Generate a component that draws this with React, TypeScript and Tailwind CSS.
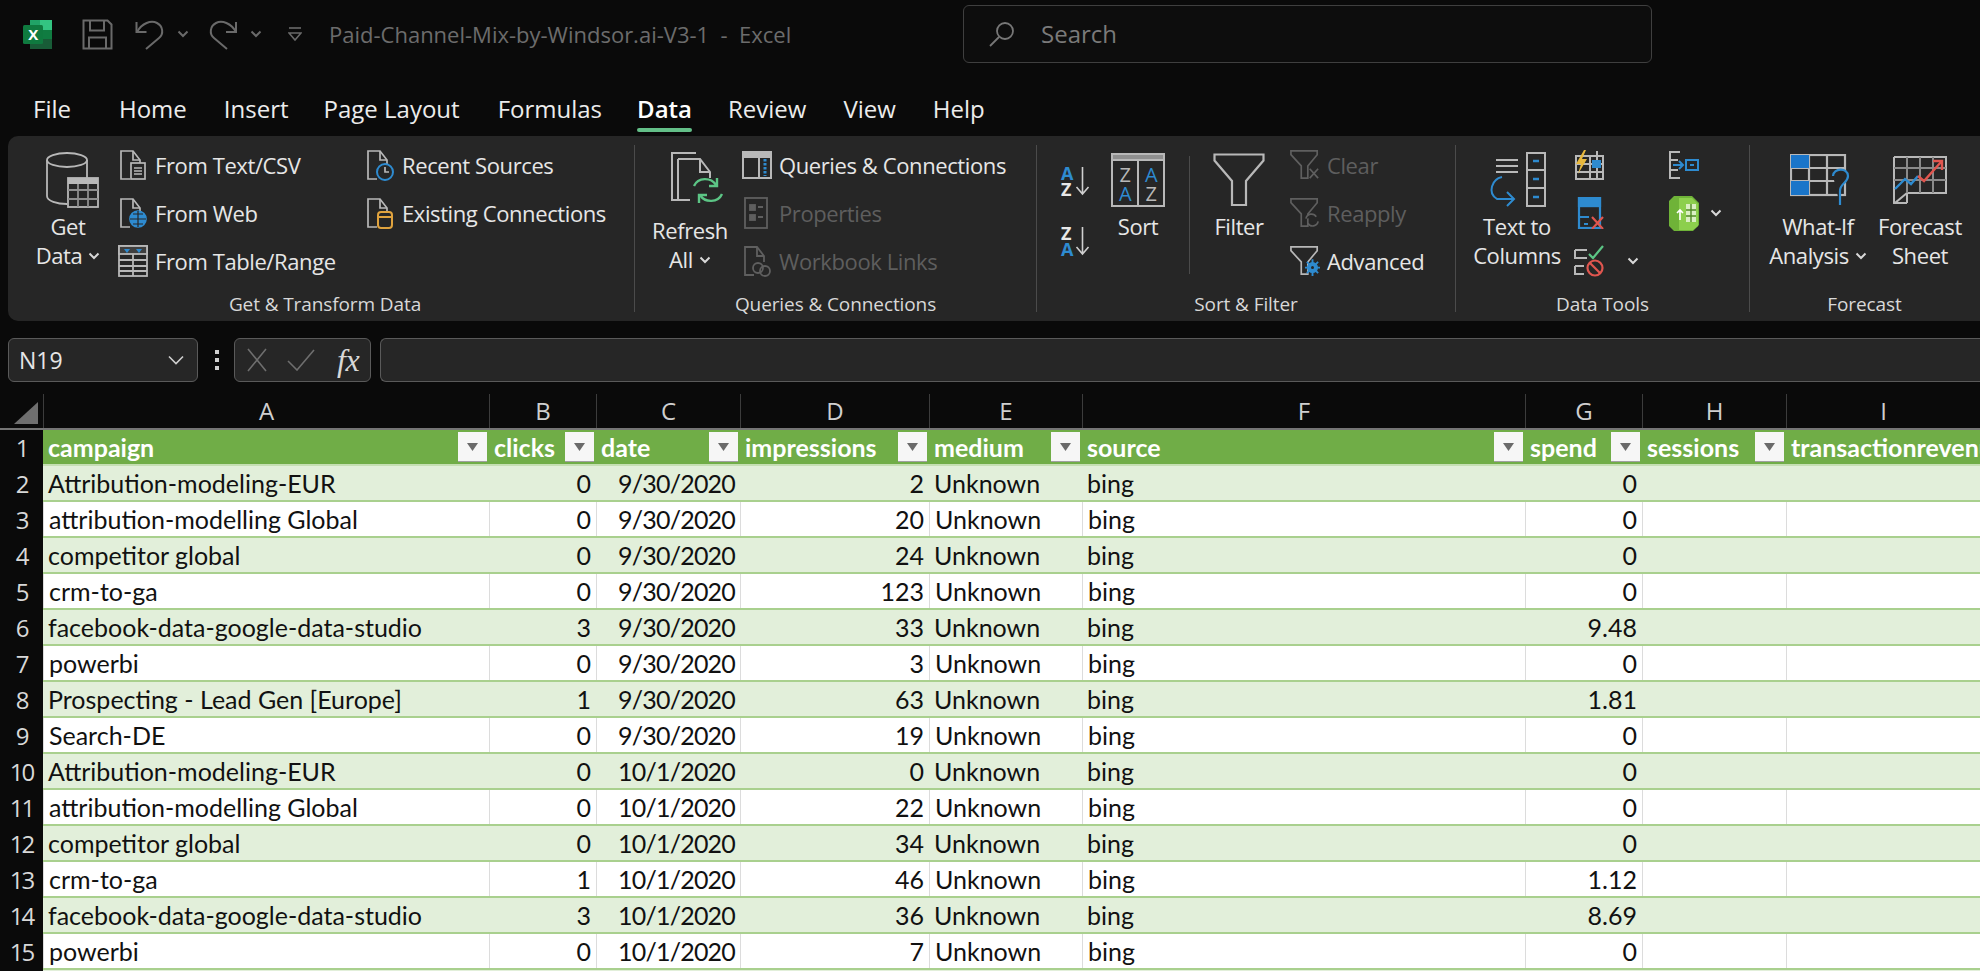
import React from "react";

const G = "#b8b8b8";
const D = "#5f5f5f";
const BL = "#2e8bd0";
const FONT = "font-['Open_Sans','Noto_Sans',sans-serif]";

const Chev = ({ c = "#d8d8d8" }: { c?: string }) => (
  <svg width="12" height="8" viewBox="0 0 12 8" fill="none" stroke={c} strokeWidth="2"><path d="M1.5 1.5L6 6l4.5-4.5" /></svg>
);

const Excel = () => (
  <svg width="31" height="31" viewBox="0 0 31 31">
    <path d="M8 1h20a2 2 0 012 2v25a2 2 0 01-2 2H8z" fill="#21a366" />
    <rect x="18" y="1" width="12" height="10" fill="#33c481" />
    <rect x="8" y="11" width="22" height="9" fill="#107c41" />
    <rect x="8" y="20" width="22" height="10" fill="#185c37" />
    <rect x="1" y="6" width="20" height="19" rx="1.5" fill="#0f7a3f" />
    <text x="11" y="21" textAnchor="middle" fontSize="15" fontWeight="700" fill="#fff" fontFamily="Open Sans">X</text>
  </svg>
);

const Save = () => (
  <svg width="31" height="31" viewBox="0 0 31 31" fill="none" stroke="#6a6a6a" strokeWidth="2">
    <path d="M1.5 1.5h24l4 4v24h-28z" /><path d="M8 1.5v10h14v-10" /><path d="M7 29.5v-11h17v11" />
  </svg>
);
const Undo = () => (
  <svg width="29" height="31" viewBox="0 0 29 31" fill="none" stroke="#6a6a6a" strokeWidth="2">
    <path d="M1.5 3v10h10" /><path d="M2 13C7 4 16 1 22 4c6 3 7 11 2 15L11 30" />
  </svg>
);
const Redo = () => (
  <svg width="29" height="31" viewBox="0 0 29 31" fill="none" stroke="#6a6a6a" strokeWidth="2">
    <path d="M27 3v10H17" /><path d="M27 13C22 4 13 1 7 4 1 7 0 15 5 19l13 11" />
  </svg>
);
const Customize = () => (
  <svg width="14" height="16" viewBox="0 0 14 16" fill="none" stroke="#6a6a6a" strokeWidth="1.6">
    <path d="M1 2h12" /><path d="M1 7h12l-6 7z" />
  </svg>
);
const SearchI = () => (
  <svg width="28" height="28" viewBox="0 0 28 28" fill="none" stroke="#777" strokeWidth="1.8">
    <circle cx="17" cy="11" r="8" /><path d="M11 17L2 26" />
  </svg>
);

const GetDataI = () => (
  <svg width="54" height="56" viewBox="0 0 54 56" fill="none" stroke={G} strokeWidth="1.8">
    <ellipse cx="21" cy="8" rx="20" ry="7" />
    <path d="M1 8v36c0 5 10 8 20 8" /><path d="M41 8v18" />
    <rect x="22" y="26" width="30" height="29" fill="#262626" />
    <rect x="22" y="26" width="30" height="6" fill={G} stroke="none" />
    <path d="M22 38h30M22 47h30M32 32v23M42 32v23" stroke="#8e8e8e" />
  </svg>
);
const Doc = ({ x, c = G }: { x?: React.ReactNode; c?: string }) => (
  <svg width="30" height="32" viewBox="0 0 30 32" fill="none" stroke={c} strokeWidth="1.7">
    <path d="M12 30H3V2h12l7 9v4" /><path d="M15 2v9h7" />
    {x}
  </svg>
);
const TextCsv = () => <Doc x={<g><rect x="13" y="14" width="14" height="16" fill="#262626" /><path d="M16 19h8M16 22h8M16 25h8" /></g>} />;
const WebI = () => <Doc x={<g stroke={BL}><circle cx="20" cy="22" r="8" fill={BL} /><path d="M12 22h16M20 14v16M15 17h10M15 27h10" stroke="#262626" strokeWidth="1.2" /></g>} />;
const TableI = () => (
  <svg width="30" height="32" viewBox="0 0 30 32" fill="none" stroke={G} strokeWidth="1.8">
    <rect x="1" y="1" width="28" height="30" /><rect x="1" y="1" width="28" height="8" fill="#3f3f3f" />
    <path d="M6 4h6l-3 4zM18 4h6l-3 4z" fill={BL} stroke="none" />
    <path d="M1 15h28M1 21h28M1 26h28M15 9v22" />
  </svg>
);
const RecentI = () => <Doc x={<g stroke={BL}><circle cx="20" cy="23" r="8" fill="#262626" strokeWidth="2" /><path d="M20 18v5h4" stroke={G} /></g>} />;
const ExistI = () => <Doc x={<g stroke="#e0a33e" strokeWidth="2"><rect x="13" y="15" width="14" height="16" rx="3" fill="#262626" /><path d="M13 20h14" /></g>} />;

const RefreshI = () => (
  <svg width="56" height="60" viewBox="0 0 56 60" fill="none" stroke={G} strokeWidth="2">
    <path d="M26 1H2v47h18" /><path d="M8 7v41" />
    <path d="M8 7h22l10 13v6" /><path d="M30 7v13h10" />
    <g stroke="#5cc585" strokeWidth="2.4">
      <path d="M24 34c4-9 17-9 22-1" /><path d="M47 26v8h-8" />
      <path d="M52 42c-4 9-17 9-22 1" /><path d="M29 51v-8h8" />
    </g>
  </svg>
);
const QueriesI = () => (
  <svg width="30" height="28" viewBox="0 0 30 28" fill="none" stroke={G} strokeWidth="2">
    <rect x="1" y="1" width="28" height="26" /><rect x="1" y="1" width="28" height="5" fill={G} />
    <path d="M17 6v21" />
    <path d="M23 8v17" stroke={BL} strokeWidth="3" strokeDasharray="2.5 1.5" />
  </svg>
);
const PropsI = () => (
  <svg width="30" height="32" viewBox="0 0 30 32" fill="none" stroke={D} strokeWidth="1.8">
    <rect x="3" y="1" width="22" height="30" /><rect x="8" y="8" width="5" height="5" fill={D} /><rect x="8" y="18" width="5" height="5" fill={D} /><path d="M16 10h5M16 20h5" />
  </svg>
);
const LinksI = () => (
  <svg width="30" height="32" viewBox="0 0 30 32" fill="none" stroke={D} strokeWidth="1.8">
    <path d="M12 30H3V2h12l7 9v6" /><path d="M15 2v9h7" />
    <circle cx="16" cy="23" r="5" fill="#262626" /><circle cx="23" cy="26" r="5" />
  </svg>
);
const SortAZ = ({ rev }: { rev?: boolean }) => (
  <div className={`flex w-[31px] items-center ${FONT}`}>
    <div className="flex flex-col text-[18px] font-bold leading-[16px]">
      <span className={rev ? "text-[#e8e8e8]" : "text-[#2e8bd0]"}>{rev ? "Z" : "A"}</span>
      <span className={rev ? "text-[#2e8bd0]" : "text-[#e8e8e8]"}>{rev ? "A" : "Z"}</span>
    </div>
    <svg width="15" height="30" viewBox="0 0 15 30" fill="none" stroke="#d0d0d0" strokeWidth="1.6" className="ml-[2px]"><path d="M7.5 1v27M1.5 21l6 7 6-7" /></svg>
  </div>
);
const SortI = () => (
  <svg width="54" height="54" viewBox="0 0 54 54" fill="none" stroke={G} strokeWidth="2">
    <rect x="1" y="1" width="52" height="52" /><rect x="1" y="1" width="52" height="6" fill="#8f8f8f" /><path d="M27 7v46" />
    <text x="14" y="29" fontSize="20" textAnchor="middle" fill={G} stroke="none" fontFamily="Open Sans">Z</text>
    <text x="14" y="48" fontSize="20" textAnchor="middle" fill={BL} stroke="none" fontFamily="Open Sans">A</text>
    <text x="40" y="29" fontSize="20" textAnchor="middle" fill={BL} stroke="none" fontFamily="Open Sans">A</text>
    <text x="40" y="48" fontSize="20" textAnchor="middle" fill={G} stroke="none" fontFamily="Open Sans">Z</text>
  </svg>
);
const FilterI = () => (
  <svg width="52" height="54" viewBox="0 0 52 54" fill="none" stroke={G} strokeWidth="2.2">
    <path d="M1.5 1.5h49v6L33 28v24H19V28L1.5 7.5z" />
  </svg>
);
const FunnelS = ({ c, x }: { c: string; x?: React.ReactNode }) => (
  <svg width="32" height="32" viewBox="0 0 32 32" fill="none" stroke={c} strokeWidth="1.8">
    <path d="M1 1h28v4L19 17v13h-7V17L1 5z" />{x}
  </svg>
);
const ClearI = () => <FunnelS c={D} x={<path d="M21 20l9 10M30 20l-9 10" />} />;
const ReapplyI = () => <FunnelS c={D} x={<g><path d="M17 22a6 6 0 0111-2M30 25a6 6 0 01-11 2" fill="#262626" /></g>} />;
const AdvI = () => <FunnelS c={G} x={<g fill={BL} stroke={BL}><circle cx="24" cy="23" r="5" /><path d="M24 14v18M16 23h16M18 17l12 12M30 17L18 29" strokeWidth="2" /><circle cx="24" cy="23" r="1.6" fill="#262626" stroke="none" /></g>} />;

const TextColI = () => (
  <svg width="58" height="56" viewBox="0 0 58 56" fill="none" stroke={G} strokeWidth="2">
    <path d="M8 8h22M8 14h22M8 20h22" strokeWidth="2.2" />
    <rect x="39" y="1" width="18" height="53" />
    <path d="M39 18h18M39 36h18" />
    <path d="M45 9h6M45 27h6M45 45h6" stroke={BL} strokeWidth="2.4" />
    <path d="M13 26C3 28-2 42 8 48l16 0M18 41l7 7-7 7" stroke={BL} strokeWidth="2" transform="translate(1 -1)" />
  </svg>
);
const FlashI = () => (
  <svg width="31" height="30" viewBox="0 0 31 30" fill="none" stroke={G} strokeWidth="2">
    <rect x="2" y="6" width="27" height="23" /><path d="M2 14h27M2 22h27M16 6v23M23 1v28" />
    <path d="M18 10h9v8h-9z" fill={BL} stroke="none" />
    <path d="M10 0L2 14h5l-3 10L13 9H8l4-9z" fill="#e9b93c" stroke="none" />
  </svg>
);
const DupI = () => (
  <svg width="31" height="32" viewBox="0 0 31 32" fill="none" stroke={BL} strokeWidth="2.2">
    <rect x="5" y="1" width="21" height="30" /><path d="M5 9h21" /><rect x="5" y="1" width="21" height="8" fill={BL} />
    <path d="M5 20h10M10 27h4" />
    <path d="M18 20l11 12M29 20L18 32" stroke="#e0564f" />
  </svg>
);
const ValidI = () => (
  <svg width="31" height="32" viewBox="0 0 31 32" fill="none" stroke={G} strokeWidth="2">
    <path d="M1 5h12M1 5v8h12M1 21v8h9M1 21h9" /><path d="M15 9l4 4 10-12" stroke="#5cc585" strokeWidth="2.2" />
    <circle cx="21" cy="23" r="7.5" stroke="#e0564f" strokeWidth="2.2" /><path d="M16 18l10 10" stroke="#e0564f" strokeWidth="2.2" />
  </svg>
);
const ConsolI = () => (
  <svg width="31" height="28" viewBox="0 0 31 28" fill="none" stroke={G} strokeWidth="2">
    <path d="M12 1H2v8h8M12 27H2v-8h8M2 1v26" /><rect x="18" y="9" width="12" height="10" stroke={BL} /><path d="M22 14h4" stroke={BL} /><path d="M5 14h10M11 10l4 4-4 4" stroke={BL} />
  </svg>
);
const PivotI = () => (
  <svg width="32" height="38" viewBox="0 0 32 38">
    <path d="M6 2h18l7 7v22l-6 6H6l-5-5V7z" fill="#6fb338" />
    <path d="M11 4h13l6 6v22l-5 4H11z" fill="#8ccf4d" />
    <path d="M18 10h10v18H18z" fill="#e7f4d8" opacity="0.85" />
    <path d="M18 16h10M18 22h10M23 10v18" stroke="#4f8a24" strokeWidth="1.4" />
    <path d="M12 26v-10M9 19l3-3 3 3" stroke="#fff" strokeWidth="1.6" fill="none" />
  </svg>
);
const WhatIfI = () => (
  <svg width="60" height="52" viewBox="0 0 60 52" fill="none" stroke={G} strokeWidth="2.2">
    <rect x="1" y="1" width="54" height="40" />
    <path d="M1 14h54M1 27h54M19 1v40M37 1v40" />
    <rect x="1" y="1" width="18" height="13" fill="#1a75c9" stroke="none" /><rect x="1" y="27" width="18" height="14" fill="#1a75c9" stroke="none" />
    <path d="M43 22c0-8 15-9 15 0 0 7-8 7-8 15v14" stroke={BL} fill="#262626" />
  </svg>
);
const FcastI = () => (
  <svg width="54" height="48" viewBox="0 0 54 48" fill="none" stroke={G} strokeWidth="2">
    <path d="M1 1h52v36H14L2 47h12M1 1v36M14 37v10M1 47V37" />
    <path d="M1 12h52M1 24h52M14 1v36M27 1v36M40 1v36" stroke="#8a8a8a" />
    <path d="M2 33l10-10 6 5 7-8" stroke={BL} strokeWidth="2.4" />
    <path d="M25 20l6 5 17-19" stroke="#e0564f" strokeWidth="2.4" />
    <path d="M40 5h9v9" stroke="#e0564f" strokeWidth="2.4" />
  </svg>
);

const Small = ({ icon, label, off }: { icon: React.ReactNode; label: string; off?: boolean }) => (
  <div className="flex h-[48px] items-center gap-[7px] whitespace-nowrap">
    <div className="flex w-[30px] shrink-0 items-center justify-center">{icon}</div>
    <span className={off ? "text-[#5e5e5e]" : "text-[#e6e6e6]"}>{label}</span>
  </div>
);
const Large = ({ icon, lines, w, h = 56, chev, shift = "" }: { icon: React.ReactNode; lines: string[]; w: string; h?: number; chev?: boolean; shift?: string }) => (
  <div className={`flex shrink-0 flex-col items-center pt-[11px] ${w}`}>
    <div className={`flex items-center justify-center ${shift}`} style={{ height: h }}>{icon}</div>
    <div className="mt-[4px] flex flex-col items-center whitespace-nowrap leading-[29px] text-[#e6e6e6]">
      {lines.map((l, i) => (
        <span key={l} className="flex items-center gap-[6px]">{l}{chev && i === lines.length - 1 && <Chev />}</span>
      ))}
    </div>
  </div>
);
const Group = ({ w, label, children, lab = "" }: { w: string; label: string; children: React.ReactNode; lab?: string }) => (
  <div className={`flex h-full flex-col justify-between ${w}`}>
    <div className="flex pt-[5px]">{children}</div>
    <div className={`mb-[5px] h-[24px] text-center text-[19px] leading-[24px] tracking-[-0.1px] text-[#d8d8d8] ${lab}`}>{label}</div>
  </div>
);
const Sep = () => <div className="my-[9px] w-px shrink-0 bg-[#4b4b4b]" />;

const cols = [
  { l: "A", w: "w-[446px]", h: "campaign" },
  { l: "B", w: "w-[107px]", h: "clicks" },
  { l: "C", w: "w-[144px]", h: "date" },
  { l: "D", w: "w-[189px]", h: "impressions" },
  { l: "E", w: "w-[153px]", h: "medium" },
  { l: "F", w: "w-[443px]", h: "source" },
  { l: "G", w: "w-[117px]", h: "spend" },
  { l: "H", w: "w-[144px]", h: "sessions" },
  { l: "I", w: "w-[194px]", h: "transactionrevenue" },
];

const rows: [string, string, string, string, string][] = [
  ["Attribution-modeling-EUR", "0", "9/30/2020", "2", "0"],
  ["attribution-modelling Global", "0", "9/30/2020", "20", "0"],
  ["competitor global", "0", "9/30/2020", "24", "0"],
  ["crm-to-ga", "0", "9/30/2020", "123", "0"],
  ["facebook-data-google-data-studio", "3", "9/30/2020", "33", "9.48"],
  ["powerbi", "0", "9/30/2020", "3", "0"],
  ["Prospecting - Lead Gen [Europe]", "1", "9/30/2020", "63", "1.81"],
  ["Search-DE", "0", "9/30/2020", "19", "0"],
  ["Attribution-modeling-EUR", "0", "10/1/2020", "0", "0"],
  ["attribution-modelling Global", "0", "10/1/2020", "22", "0"],
  ["competitor global", "0", "10/1/2020", "34", "0"],
  ["crm-to-ga", "1", "10/1/2020", "46", "1.12"],
  ["facebook-data-google-data-studio", "3", "10/1/2020", "36", "8.69"],
  ["powerbi", "0", "10/1/2020", "7", "0"],
];

const Tab = ({ t, ml, on }: { t: string; ml: string; on?: boolean }) => (
  <div className={`flex flex-col ${ml}`}>
    <span className={`h-[28px] leading-[28px] ${on ? "font-semibold text-white" : "text-[#ececec]"}`}>{t}</span>
    {on && <div className="mt-[5px] h-[4px] rounded-full bg-[#63bf88]" />}
  </div>
);

export default function App() {
  return (
    <div className={`h-[971px] w-[1980px] overflow-hidden bg-[#0a0a0a] text-[22px] tracking-[-0.4px] ${FONT}`}>
      {/* title bar */}
      <div className="flex h-[68px] items-center">
        <div className="ml-[22px]"><Excel /></div>
        <div className="ml-[29px]"><Save /></div>
        <div className="ml-[22px]"><Undo /></div>
        <div className="ml-[13px]"><Chev c="#6a6a6a" /></div>
        <div className="ml-[20px]"><Redo /></div>
        <div className="ml-[12px]"><Chev c="#6a6a6a" /></div>
        <div className="ml-[26px]"><Customize /></div>
        <div className="ml-[27px] w-[634px] whitespace-pre text-[22px] tracking-normal text-[#6c6c6c]">Paid-Channel-Mix-by-Windsor.ai-V3-1  -  Excel</div>
        <div className="flex h-[58px] w-[689px] items-center rounded-[6px] border border-[#3f3f3f] bg-[#0d0d0d] pl-[24px] text-[#7a7a7a]">
          <SearchI />
          <span className="ml-[25px] text-[24px] tracking-normal">Search</span>
        </div>
      </div>
      {/* tabs */}
      <div className="flex h-[68px] pt-[27px] text-[24px] tracking-normal">
        <Tab t="File" ml="ml-[33px]" />
        <Tab t="Home" ml="ml-[48px]" />
        <Tab t="Insert" ml="ml-[37px]" />
        <Tab t="Page Layout" ml="ml-[35px]" />
        <Tab t="Formulas" ml="ml-[38px]" />
        <Tab t="Data" ml="ml-[35px]" on />
        <Tab t="Review" ml="ml-[36px]" />
        <Tab t="View" ml="ml-[37px]" />
        <Tab t="Help" ml="ml-[37px]" />
      </div>
      {/* ribbon */}
      <div className="ml-[8px] flex h-[185px] rounded-l-[10px] bg-[#262626]">
        <Group w="w-[626px]" label="Get & Transform Data" lab="pl-[8px]">
          <Large icon={<GetDataI />} shift="pl-[10px]" lines={["Get", "Data"]} chev w="ml-[18px] w-[84px]" />
          <div className="ml-[8px] w-[247px]">
            <Small icon={<TextCsv />} label="From Text/CSV" />
            <Small icon={<WebI />} label="From Web" />
            <Small icon={<TableI />} label="From Table/Range" />
          </div>
          <div>
            <Small icon={<RecentI />} label="Recent Sources" />
            <Small icon={<ExistI />} label="Existing Connections" />
          </div>
        </Group>
        <Sep />
        <Group w="w-[401px]" label="Queries & Connections">
          <Large icon={<RefreshI />} shift="pl-[16px]" h={60} lines={["Refresh", "All"]} chev w="ml-[13px] w-[84px]" />
          <div className="ml-[10px]">
            <Small icon={<QueriesI />} label="Queries & Connections" />
            <Small icon={<PropsI />} label="Properties" off />
            <Small icon={<LinksI />} label="Workbook Links" off />
          </div>
        </Group>
        <Sep />
        <Group w="w-[418px]" label="Sort & Filter">
          <div className="ml-[24px] flex flex-col gap-[28px] pt-[24px]">
            <SortAZ />
            <SortAZ rev />
          </div>
          <Large icon={<SortI />} lines={["Sort"]} w="ml-[16px] w-[60px]" />
          <div className="ml-[21px] mt-[15px] h-[118px] w-px bg-[#4b4b4b]" />
          <Large icon={<FilterI />} lines={["Filter"]} w="ml-[19px] w-[60px]" />
          <div className="ml-[21px]">
            <Small icon={<ClearI />} label="Clear" off />
            <Small icon={<ReapplyI />} label="Reapply" off />
            <Small icon={<AdvI />} label="Advanced" />
          </div>
        </Group>
        <Sep />
        <Group w="w-[293px]" label="Data Tools">
          <Large icon={<TextColI />} lines={["Text to", "Columns"]} w="ml-[16px] w-[90px]" />
          <div className="ml-[12px] w-[94px]">
            <div className="flex h-[48px] items-center"><FlashI /></div>
            <div className="flex h-[48px] items-center"><DupI /></div>
            <div className="flex h-[48px] items-center gap-[22px]"><ValidI /><Chev /></div>
          </div>
          <div>
            <div className="flex h-[48px] items-center"><ConsolI /></div>
            <div className="flex h-[48px] items-center gap-[10px]"><PivotI /><Chev /></div>
          </div>
        </Group>
        <Sep />
        <Group w="w-[229px]" label="Forecast">
          <Large icon={<WhatIfI />} shift="pl-[4px]" lines={["What-If", "Analysis"]} chev w="ml-[18px] w-[100px]" />
          <Large icon={<FcastI />} lines={["Forecast", "Sheet"]} w="ml-[7px] w-[90px]" />
        </Group>
      </div>
      {/* formula bar */}
      <div className="ml-[8px] mt-[17px] flex h-[44px] items-center">
        <div className="flex h-full w-[190px] items-center justify-between rounded-[6px] border border-[#5a5a5a] bg-[#262626] pl-[10px] pr-[13px] text-[23px] tracking-normal text-[#e6e6e6]">
          <span>N19</span>
          <svg width="16" height="10" viewBox="0 0 16 10" fill="none" stroke="#cfcfcf" strokeWidth="1.6"><path d="M1 1.5l7 7 7-7" /></svg>
        </div>
        <div className="ml-[17px] flex flex-col gap-[4px]">
          <div className="h-[4px] w-[4px] bg-[#d0d0d0]" /><div className="h-[4px] w-[4px] bg-[#d0d0d0]" /><div className="h-[4px] w-[4px] bg-[#d0d0d0]" />
        </div>
        <div className="ml-[15px] flex h-full w-[137px] items-center rounded-[6px] border border-[#5a5a5a] bg-[#262626]">
          <svg width="20" height="24" viewBox="0 0 20 24" fill="none" stroke="#6e6e6e" strokeWidth="1.6" className="ml-[12px]"><path d="M1 1l18 22M19 1L1 23" /></svg>
          <svg width="28" height="22" viewBox="0 0 28 22" fill="none" stroke="#6e6e6e" strokeWidth="1.6" className="ml-[20px]"><path d="M1 12l9 9L27 1" /></svg>
          <span className="ml-[22px] font-['Liberation_Serif',serif] text-[32px] font-normal italic leading-none text-[#d8d8d8]">fx</span>
        </div>
        <div className="ml-[9px] h-full flex-1 rounded-l-[6px] border border-r-0 border-[#5a5a5a] bg-[#262626]" />
      </div>
      {/* column headers */}
      <div className="mt-[12px] flex h-[36px] border-b-2 border-[#757575] text-[24px] tracking-normal text-[#cfcfcf]">
        <div className="flex w-[43px] shrink-0 items-start justify-end pr-[5px] pt-[8px]">
          <svg width="24" height="22" viewBox="0 0 24 22"><path d="M24 0v22H0z" fill="#6f6f6f" /></svg>
        </div>
        {cols.map((c) => (
          <div key={c.l} className={`flex shrink-0 items-center justify-center border-l border-[#3c3c3c] ${c.w}`}>{c.l}</div>
        ))}
      </div>
      {/* sheet */}
      <div className="font-['Lato','Carlito',sans-serif] text-[25px] tracking-normal text-[#111]">
        <div className="flex h-[36px]">
          <div className={`flex w-[43px] shrink-0 items-center justify-center bg-[#0a0a0a] text-[24px] tracking-[-2px] text-[#d8d8d8] ${FONT}`}>1</div>
          <div className="flex flex-1 border-b-2 border-[#c5dfb3] bg-[#70ad47] font-bold text-white">
            {cols.map((c) => (
              <div key={c.h} className={`flex shrink-0 items-center justify-between overflow-hidden pl-[5px] pr-[2px] ${c.w}`}>
                <span className="whitespace-nowrap pt-[2px]">{c.h}</span>
                {c.l !== "I" && (
                  <div className="flex h-[30px] w-[29px] shrink-0 items-center justify-center border-b border-[#a0a0a0] bg-[#f6f6f6]">
                    <svg width="11" height="8" viewBox="0 0 11 8"><path d="M0 0h11L5.5 8z" fill="#6a6a6a" /></svg>
                  </div>
                )}
              </div>
            ))}
          </div>
        </div>
        {rows.map((r, i) => {
          const band = i % 2 === 0;
          const v = band ? "pt-[2px]" : "pt-[2px] border-l border-[#dcdcdc]";
          return (
            <div key={i} className="flex h-[36px]">
              <div className={`flex w-[43px] shrink-0 items-center justify-center bg-[#0a0a0a] text-[24px] tracking-[-2px] text-[#d8d8d8] ${FONT}`}>{i + 2}</div>
              <div className={`flex flex-1 border-b-2 border-[#a9d08e] ${band ? "bg-[#e2efda]" : "bg-white"}`}>
                <div className={`flex w-[446px] shrink-0 items-center pl-[5px] ${v}`}>{r[0]}</div>
                <div className={`flex w-[107px] shrink-0 items-center justify-end pr-[5px] ${v}`}>{r[1]}</div>
                <div className={`flex w-[144px] shrink-0 items-center justify-end pr-[5px] tracking-[-0.8px] ${v}`}>{r[2]}</div>
                <div className={`flex w-[189px] shrink-0 items-center justify-end pr-[5px] ${v}`}>{r[3]}</div>
                <div className={`flex w-[153px] shrink-0 items-center pl-[5px] ${v}`}>Unknown</div>
                <div className={`flex w-[443px] shrink-0 items-center pl-[5px] ${v}`}>bing</div>
                <div className={`flex w-[117px] shrink-0 items-center justify-end pr-[5px] ${v}`}>{r[4]}</div>
                <div className={`w-[144px] shrink-0 ${v}`} />
                <div className={`w-[194px] shrink-0 ${v}`} />
              </div>
            </div>
          );
        })}
        <div className="flex h-[36px]">
          <div className="w-[43px] shrink-0 bg-[#0a0a0a]" />
          <div className="flex-1 bg-[#e2efda]" />
        </div>
      </div>
    </div>
  );
}
